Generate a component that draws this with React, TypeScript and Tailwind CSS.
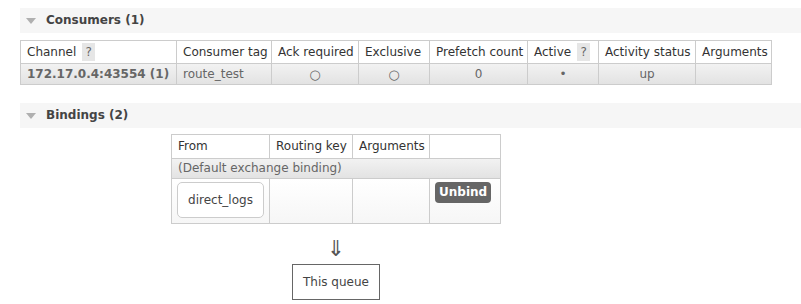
const font = { fontFamily: '"DejaVu Sans", Verdana, sans-serif' };

function SectionHeader({ title }: { title: string }) {
  return (
    <div className="h-[25px] bg-[#f6f6f6] flex items-center pl-[6px]">
      <svg width="10" height="6" viewBox="0 0 10 6" className="mr-[10px]">
        <path d="M0 0 L10 0 L5 6 Z" fill="#b0b0b0" />
      </svg>
      <span className="text-[12px] font-bold text-[#444]">{title}</span>
    </div>
  );
}

function Help() {
  return (
    <span className="inline-flex items-center justify-center w-[13px] h-[18px] ml-[6px] bg-[#e6e6e6] text-[#666] text-[12px] align-middle">
      ?
    </span>
  );
}

const th = "border border-[#cccccc] px-[6px] font-normal text-left text-[#333] whitespace-nowrap";
const td = "border border-[#cccccc] px-[6px] text-[#666] whitespace-nowrap";
const rowGrad = "bg-gradient-to-b from-[#f2f2f2] to-[#e2e2e2]";

export default function App() {
  return (
    <div className="bg-white w-[801px] h-[304px] overflow-hidden pt-[8px] pl-[20px] text-[12px] leading-[15px]" style={font}>
      <SectionHeader title="Consumers (1)" />

      <table className="mt-[7px] border-collapse table-fixed w-[751px]">
        <thead>
          <tr className="h-[23px]">
            <th className={`${th} w-[156px]`}>Channel<Help /></th>
            <th className={`${th} w-[95px]`}>Consumer tag</th>
            <th className={`${th} w-[87px]`}>Ack required</th>
            <th className={`${th} w-[71px]`}>Exclusive</th>
            <th className={`${th} w-[98px]`}>Prefetch count</th>
            <th className={`${th} w-[71px]`}>Active<Help /></th>
            <th className={`${th} w-[97px]`}>Activity status</th>
            <th className={`${th} w-[76px]`}>Arguments</th>
          </tr>
        </thead>
        <tbody>
          <tr className={`h-[21px] ${rowGrad}`}>
            <td className={`${td} font-bold text-[#222]`}>172.17.0.4:43554 (1)</td>
            <td className={td}>route_test</td>
            <td className={`${td} text-center text-[13px]`}>○</td>
            <td className={`${td} text-center text-[13px]`}>○</td>
            <td className={`${td} text-center`}>0</td>
            <td className={`${td} text-center`}>•</td>
            <td className={`${td} text-center`}>up</td>
            <td className={td}></td>
          </tr>
        </tbody>
      </table>

      <div className="mt-[18px]">
        <SectionHeader title="Bindings (2)" />
      </div>

      <div className="ml-[151px] w-[330px] flex flex-col items-center">
        <table className="mt-[6px] border-collapse table-fixed w-[329px]">
          <thead>
            <tr className="h-[24px]">
              <th className={`${th} w-[98px]`}>From</th>
              <th className={`${th} w-[83px]`}>Routing key</th>
              <th className={`${th} w-[77px]`}>Arguments</th>
              <th className={`${th} w-[71px]`}></th>
            </tr>
          </thead>
          <tbody>
            <tr className={`h-[20px] ${rowGrad}`}>
              <td colSpan={4} className={td}>(Default exchange binding)</td>
            </tr>
            <tr className="h-[45px] bg-gradient-to-b from-white to-[#f6f6f6]">
              <td className="border border-[#cccccc] px-[5px] pt-[3px] pb-[5px] align-top">
                <div className="w-[87px] h-[36px] border border-[#cccccc] rounded-[5px] bg-white flex items-center justify-center text-[#444]">
                  direct_logs
                </div>
              </td>
              <td className="border border-[#cccccc]"></td>
              <td className="border border-[#cccccc]"></td>
              <td className="border border-[#cccccc] px-[5px] pt-[3px] align-top">
                <button className="h-[21px] px-[4px] rounded-[4px] bg-[#666] text-white font-bold text-[12px]" style={font}>
                  Unbind
                </button>
              </td>
            </tr>
          </tbody>
        </table>

        <div className="mt-[14px] text-[22px] leading-[22px] text-[#555]">⇓</div>
        <div className="mt-[4px] h-[36px] px-[10px] border border-[#666] flex items-center text-[#444]">
          This queue
        </div>
      </div>
    </div>
  );
}
